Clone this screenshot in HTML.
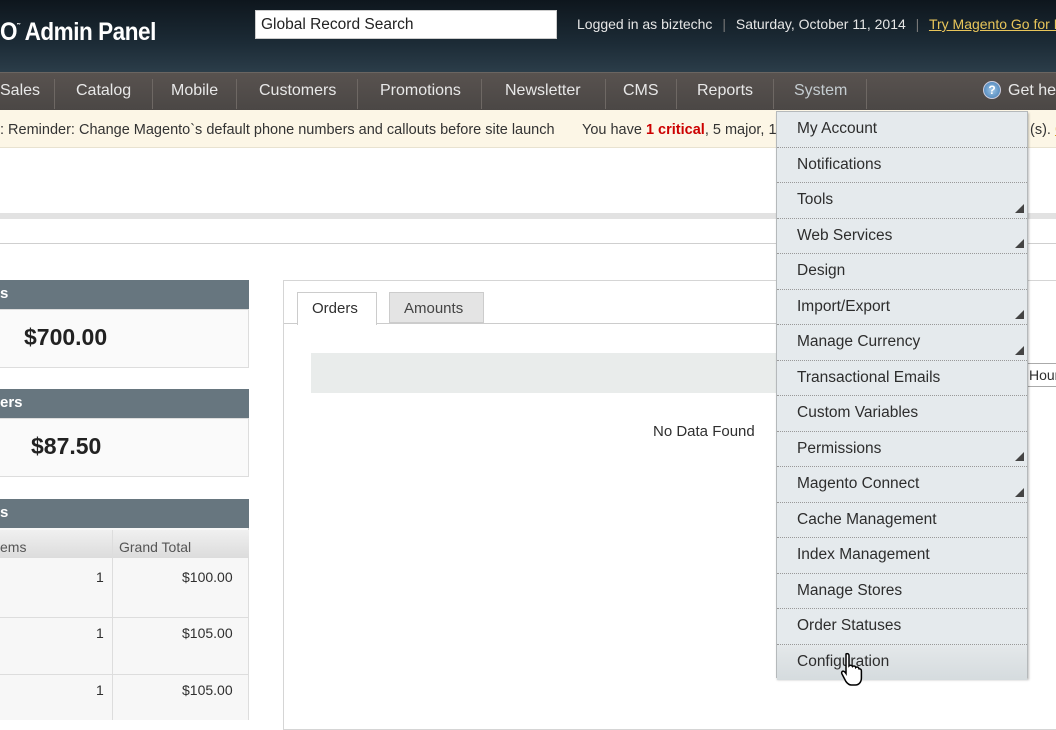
<!DOCTYPE html>
<html><head><meta charset="utf-8"><style>
*{margin:0;padding:0;box-sizing:border-box}
body{width:1056px;height:720px;overflow:hidden;background:#fff;font-family:"Liberation Sans",Arial,sans-serif;position:relative;color:#2f2f2f}
.abs{position:absolute}
#hdr{left:0;top:0;width:1056px;height:72px;background:linear-gradient(#0e161d,#1c2b36 60%,#2b3d49)}
#nav{left:0;top:72px;width:1056px;height:38px;background:linear-gradient(#58524f,#4b4745);border-top:1px solid #6a6561}
#nav span{position:absolute;top:9px;font-size:16px;color:#e8e8e8;white-space:nowrap}
#nav i{position:absolute;top:6px;width:1px;height:30px;background:#6e6864}
#notice{left:0;top:110px;width:1056px;height:38px;background:#fcf6e6;border-bottom:1px solid #e8e2d0;font-size:14.5px;color:#333}
.box{left:0;width:249px;background:#fafafa;border:1px solid #ddd;border-left:none}
.bh{left:0;width:249px;height:29px;background:#67767f;color:#fff;font-weight:bold;font-size:15px;padding:5px 0 0 0}
#menu{left:776px;top:111px;width:252px;height:567px;background:#e5eaed;border:1px solid #b5b9bb;box-shadow:1px 2px 2px rgba(0,0,0,.25)}
.mi{position:absolute;left:0;width:250px;height:35.5px;border-bottom:1px dotted #999;font-size:15.5px;color:#2d2d2d;padding:8px 0 0 20px}
.ar{position:absolute;right:3px;bottom:5px;width:0;height:0;border-left:9px solid transparent;border-bottom:9px solid #444}
</style></head><body>
<div id="hdr" class="abs"></div>
<div class="abs" style="left:0;top:18px;font-size:25px;font-weight:bold;color:#fff;letter-spacing:-.5px;transform:scaleX(.9);transform-origin:left">O<sup style="font-size:10px">˜</sup> Admin Panel</div>
<div class="abs" style="left:255px;top:10px;width:302px;height:29px;background:#fff;border:1px solid #ccc;font-size:15.5px;color:#222;padding:5px 5px">Global Record Search</div>
<div class="abs" style="left:577px;top:16px;font-size:14px;color:#e6e6e6;white-space:nowrap">Logged in as biztechc <span style="color:#777;margin:0 6px">|</span> Saturday, October 11, 2014 <span style="color:#777;margin:0 6px">|</span> <u style="color:#e8c55a">Try Magento Go for Free</u></div>
<div id="nav" class="abs">
<span style="left:0">Sales</span><i style="left:54px"></i>
<span style="left:76px">Catalog</span><i style="left:152px"></i>
<span style="left:171px">Mobile</span><i style="left:236px"></i>
<span style="left:259px">Customers</span><i style="left:357px"></i>
<span style="left:380px">Promotions</span><i style="left:481px"></i>
<span style="left:505px">Newsletter</span><i style="left:605px"></i>
<span style="left:623px">CMS</span><i style="left:676px"></i>
<span style="left:697px">Reports</span><i style="left:773px"></i>
<span style="left:794px;color:#c4ccd0">System</span><i style="left:866px"></i>
<div style="position:absolute;left:983px;top:8px;width:18px;height:18px;border-radius:50%;background:radial-gradient(#9fc6e8,#3d78b0);border:1px solid #ccd;color:#fff;font-size:12px;font-weight:bold;text-align:center;line-height:16px">?</div>
<span style="left:1008px">Get help</span>
</div>
<div id="notice" class="abs"><div style="position:absolute;left:0;top:12px;white-space:nowrap">: Reminder: Change Magento`s default phone numbers and callouts before site launch</div>
<div style="position:absolute;left:582px;top:12px;white-space:nowrap">You have <b style="color:#c00">1 critical</b>, 5 major, 19</div>
<div style="position:absolute;left:1030px;top:12px;white-space:nowrap">(s). <u style="color:#d8a020">G</u></div></div>
<div class="abs" style="left:0;top:213px;width:1056px;height:6px;background:#e2e2e2"></div>
<div class="abs" style="left:0;top:243px;width:1056px;height:1px;background:#cfcfcf"></div>
<div class="abs bh" style="top:280px">s</div>
<div class="abs box" style="top:309px;height:59px;font-size:23px;font-weight:bold;color:#222;padding:14px 0 0 24px">$700.00</div>
<div class="abs bh" style="top:389px">ers</div>
<div class="abs box" style="top:418px;height:59px;font-size:23px;font-weight:bold;color:#222;padding:14px 0 0 31px">$87.50</div>
<div class="abs bh" style="top:499px">s</div>
<div class="abs" style="left:0;top:528px;width:249px;height:192px;background:#f7f7f7;border-right:1px solid #ddd"></div>
<div class="abs" style="left:0;top:530px;width:249px;height:28px;background:linear-gradient(#f0f0f0,#dcdcdc);font-size:14px;color:#555"><span style="position:absolute;left:0;top:9px">ems</span><span style="position:absolute;left:119px;top:9px">Grand Total</span></div>
<div class="abs" style="left:112px;top:530px;width:1px;height:190px;background:#ddd"></div>
<div class="abs" style="left:0;top:617px;width:249px;height:1px;background:#ddd"></div>
<div class="abs" style="left:0;top:674px;width:249px;height:1px;background:#ddd"></div>
<div class="abs" style="left:96px;top:569px;font-size:14px">1</div><div class="abs" style="left:182px;top:569px;font-size:14px">$100.00</div>
<div class="abs" style="left:96px;top:625px;font-size:14px">1</div><div class="abs" style="left:182px;top:625px;font-size:14px">$105.00</div>
<div class="abs" style="left:96px;top:682px;font-size:14px">1</div><div class="abs" style="left:182px;top:682px;font-size:14px">$105.00</div>
<div class="abs" style="left:283px;top:280px;width:800px;height:450px;border:1px solid #d5d5d5;background:#fff"></div>
<div class="abs" style="left:284px;top:323px;width:500px;height:1px;background:#ccc"></div>
<div class="abs" style="left:297px;top:292px;width:80px;height:33px;background:#fff;border:1px solid #ccc;border-bottom:none;font-size:15px;padding:7px 0 0 14px">Orders</div>
<div class="abs" style="left:389px;top:292px;width:95px;height:31px;background:#e4e4e4;border:1px solid #ccc;font-size:15px;color:#444;padding:7px 0 0 14px">Amounts</div>
<div class="abs" style="left:311px;top:353px;width:480px;height:40px;background:#e9eceb"></div>
<div class="abs" style="left:653px;top:423px;font-size:15px">No Data Found</div>
<div class="abs" style="left:1026px;top:363px;width:40px;height:24px;border:1px solid #aaa;background:#fff;font-size:14px;padding:3px 0 0 2px">Hour</div>
<div id="menu" class="abs">
<div class="mi" style="top:0">My Account</div>
<div class="mi" style="top:35.5px">Notifications</div>
<div class="mi" style="top:71px">Tools<div class="ar"></div></div>
<div class="mi" style="top:106.5px">Web Services<div class="ar"></div></div>
<div class="mi" style="top:142px">Design</div>
<div class="mi" style="top:177.5px">Import/Export<div class="ar"></div></div>
<div class="mi" style="top:213px">Manage Currency<div class="ar"></div></div>
<div class="mi" style="top:248.5px">Transactional Emails</div>
<div class="mi" style="top:284px">Custom Variables</div>
<div class="mi" style="top:319.5px">Permissions<div class="ar"></div></div>
<div class="mi" style="top:355px">Magento Connect<div class="ar"></div></div>
<div class="mi" style="top:390.5px">Cache Management</div>
<div class="mi" style="top:426px">Index Management</div>
<div class="mi" style="top:461.5px">Manage Stores</div>
<div class="mi" style="top:497px">Order Statuses</div>
<div class="mi" style="top:532.5px;border-bottom:none;background:linear-gradient(#e4e8ea,#d5dbde)">Configuration</div>
</div>
<svg class="abs" style="left:840px;top:652px" width="26" height="38" viewBox="0 0 26 38"><path d="M6 2c1.5-1 3 0 3 1.5V14c1-1 3-1 3.5.5 1-1 3-.5 3.2 1 1-1 3-.5 3.2 1.2 1 0 2.5.5 2.5 2V26c0 4-2.5 7-6 7h-4c-2.5 0-4-1.5-5.5-3.5L2 22c-1-1.5 0-3 1.5-2.8.8.1 1.5.8 2.5 2.3V3.5z" fill="#fff" stroke="#000" stroke-width="1.5"/></svg>
</body></html>
